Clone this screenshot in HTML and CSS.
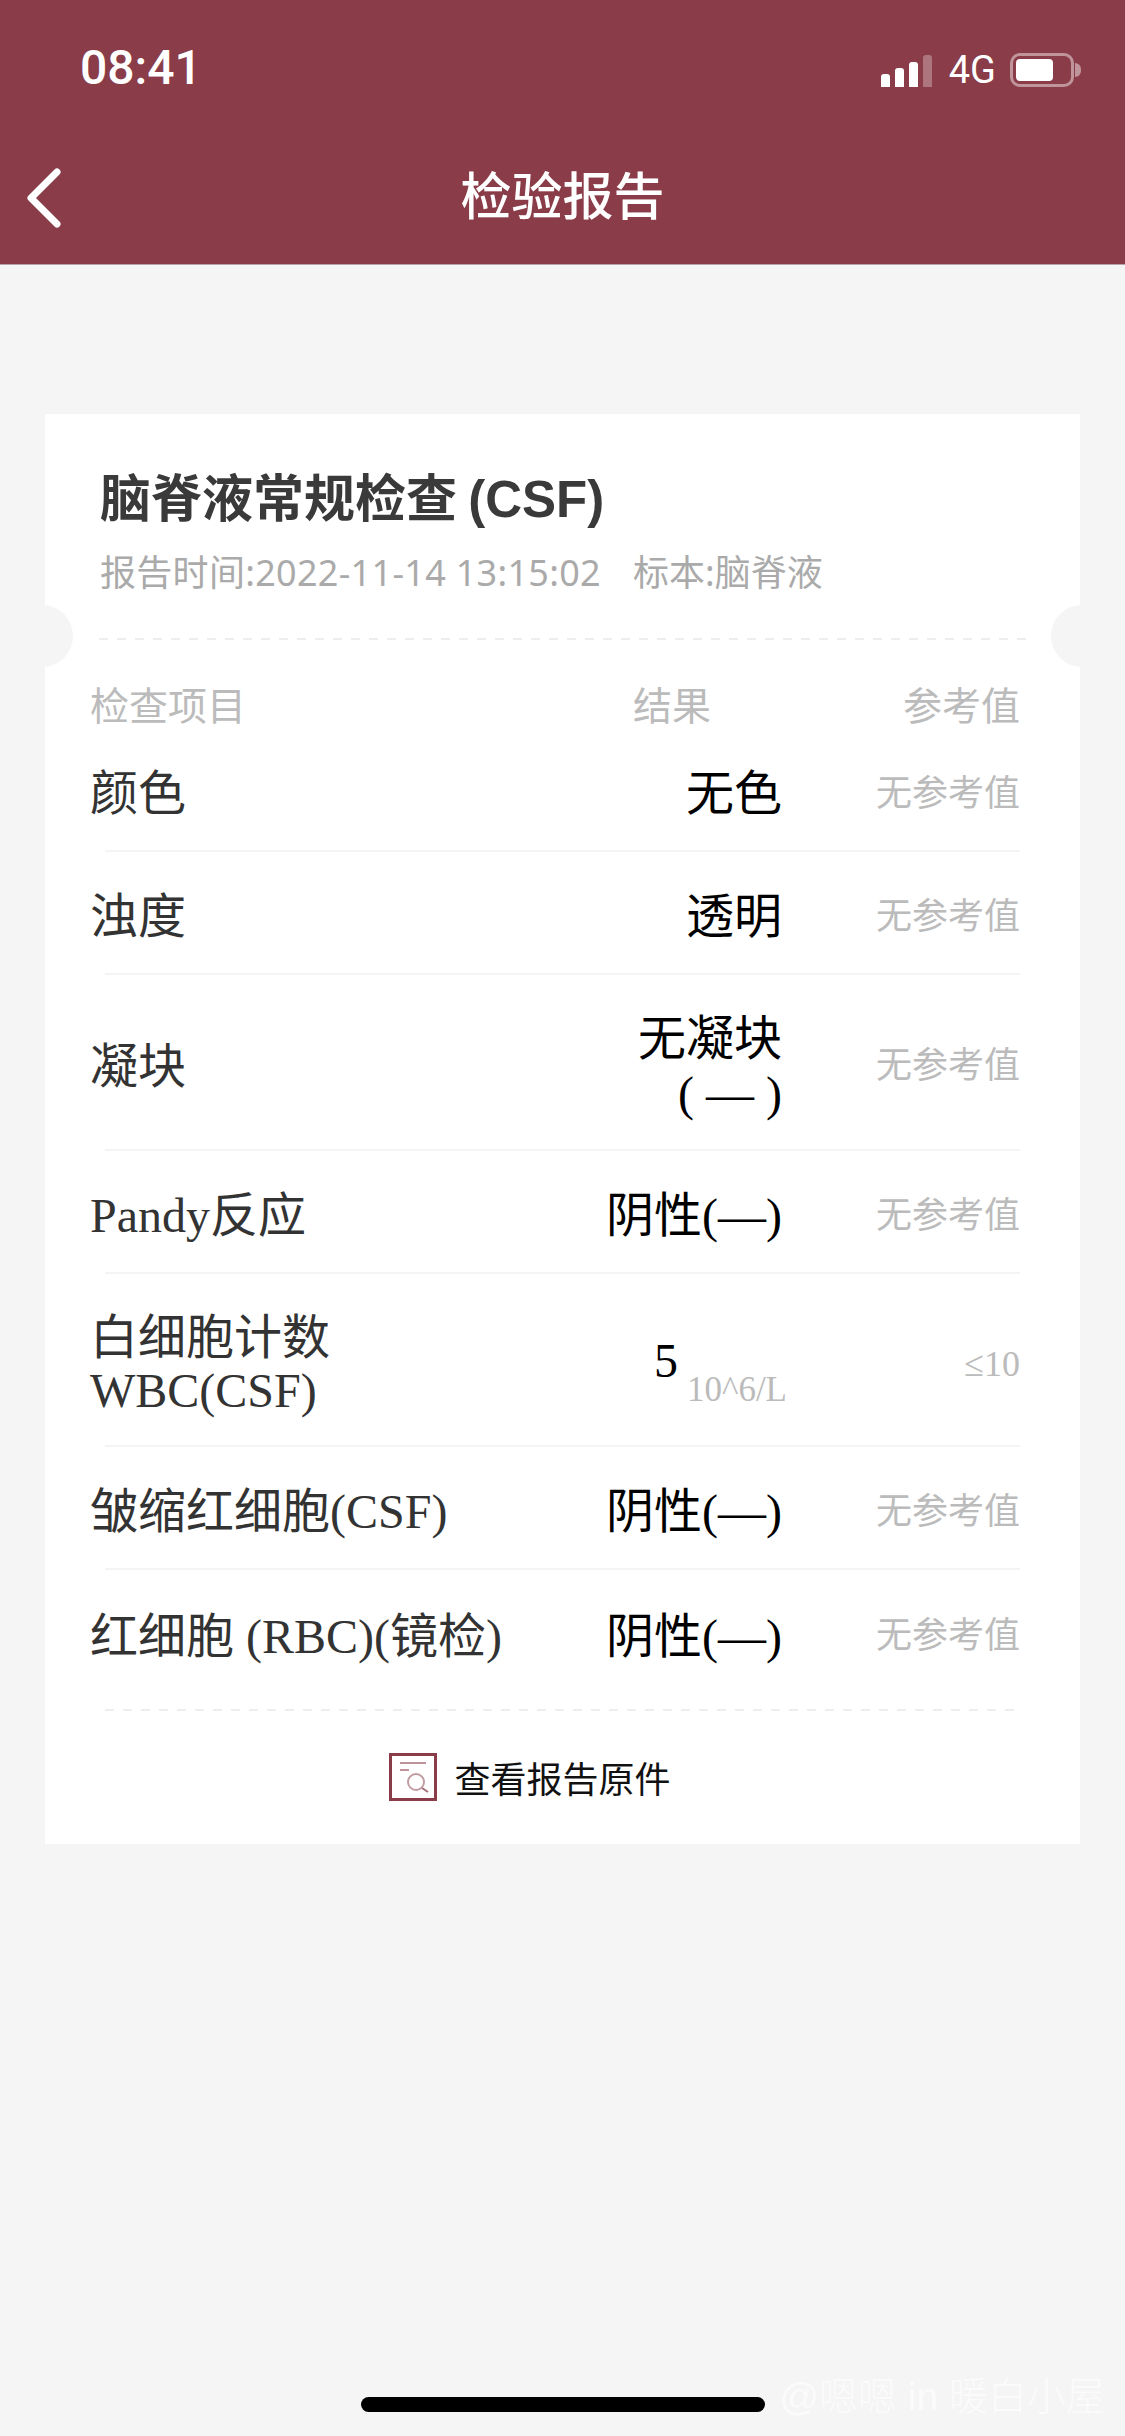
FILE: index.html
```html
<!DOCTYPE html>
<html lang="zh-CN">
<head>
    <meta charset="UTF-8">
    <meta name="viewport" content="width=device-width, initial-scale=1.0">
    <title>检验报告</title>
    <link rel="stylesheet" href="styles.css">
</head>
<body>
    <header class="top">
        <div class="status-bar">
            <span class="time">08:41</span>
            <div class="status-right">
                <div class="signal">
                    <i class="bar bar-1"></i>
                    <i class="bar bar-2"></i>
                    <i class="bar bar-3"></i>
                    <i class="bar bar-4"></i>
                </div>
                <span class="network">4G</span>
                <div class="battery"><i class="battery-level"></i></div>
                <i class="battery-nub"></i>
            </div>
        </div>
        <div class="nav-bar">
            <svg class="back" width="40" height="64" viewBox="0 0 40 64">
                <path d="M33 6 L7 32 L33 58" fill="none" stroke="#fff" stroke-width="7" stroke-linecap="round" stroke-linejoin="round"/>
            </svg>
            <h1 class="nav-title">检验报告</h1>
        </div>
    </header>

    <main class="card">
        <i class="notch notch-left"></i>
        <i class="notch notch-right"></i>

        <div class="card-head">
            <h2 class="report-title">脑脊液常规检查 (CSF)</h2>
            <p class="report-meta"><span class="meta-time">报告时间:2022-11-14 13:15:02</span><span>标本:脑脊液</span></p>
        </div>
        <div class="dash dash-top"></div>

        <div class="table-head">
            <span>检查项目</span>
            <span>结果</span>
            <span class="head-ref">参考值</span>
        </div>

        <div class="row">
            <div class="name">颜色</div>
            <div class="result">无色</div>
            <div class="ref">无参考值</div>
        </div>
        <div class="row">
            <div class="name">浊度</div>
            <div class="result">透明</div>
            <div class="ref">无参考值</div>
        </div>
        <div class="row row-clot">
            <div class="name">凝块</div>
            <div class="result">无凝块<br>( — )</div>
            <div class="ref">无参考值</div>
        </div>
        <div class="row">
            <div class="name">Pandy反应</div>
            <div class="result">阴性(—)</div>
            <div class="ref">无参考值</div>
        </div>
        <div class="row row-wbc">
            <div class="name">白细胞计数<br>WBC(CSF)</div>
            <div class="result result-num">5<span class="unit">10^6/L</span></div>
            <div class="ref ref-num">≤10</div>
        </div>
        <div class="row">
            <div class="name">皱缩红细胞(CSF)</div>
            <div class="result">阴性(—)</div>
            <div class="ref">无参考值</div>
        </div>
        <div class="row row-last">
            <div class="name">红细胞 (RBC)(镜检)</div>
            <div class="result">阴性(—)</div>
            <div class="ref">无参考值</div>
        </div>

        <div class="dash dash-bottom"></div>

        <div class="original">
            <svg width="48" height="48" viewBox="0 0 48 48">
                <rect x="1.5" y="1.5" width="45" height="45" fill="#fff" stroke="#8a3c48" stroke-width="3"/>
                <path d="M11 10 H37" stroke="#a8707a" stroke-width="1.5" fill="none"/>
                <path d="M11 17 H20" stroke="#a8707a" stroke-width="1.5" fill="none"/>
                <circle cx="27" cy="29" r="8" fill="none" stroke="#c29ca3" stroke-width="2"/>
                <path d="M33 35 L39 39" stroke="#a8707a" stroke-width="2" fill="none"/>
            </svg>
            <span>查看报告原件</span>
        </div>
    </main>

    <div class="home-bar"></div>
    <div class="watermark">@嗯嗯 in 暖白小屋</div>
</body>
</html>
```

FILE: styles.css
```css
* {
    box-sizing: border-box;
}
body {
    margin: 0;
    height: 2436px;
    position: relative;
    overflow: hidden;
    background: #f5f5f5;
    font-family: "Liberation Sans", "Noto Sans CJK SC", sans-serif;
}
/* Шапка */
.top {
    height: 265px;
    background: #8a3c48;
    border-bottom: 1px solid #b9a5a8;
    color: #fff;
}
.status-bar {
    height: 140px;
    padding: 41px 44px 0 80px;
    display: flex;
    justify-content: space-between;
    align-items: flex-start;
}
.time {
    margin-top: 1px;
    font-family: Roboto, sans-serif;
    font-weight: 500;
    font-size: 48px;
    line-height: 52px;
}
.status-right {
    display: flex;
    align-items: center;
    height: 50px;
}
.signal {
    display: flex;
    align-items: flex-end;
    gap: 5px;
    height: 32px;
    margin-top: 9px;
    margin-right: 3px;
}
.bar {
    display: block;
    width: 9px;
    background: #fff;
    border-radius: 3px 3px 0 0;
}
.bar-1 { height: 13px; }
.bar-2 { height: 19px; }
.bar-3 { height: 25px; }
.bar-4 { height: 32px; background: rgba(255,255,255,0.3); }
.network {
    font-family: Roboto, sans-serif;
    font-weight: 400;
    font-size: 38px;
    line-height: 50px;
    margin: 8px 14px 0 14px;
}
.battery {
    width: 64px;
    height: 34px;
    margin-top: 8px;
    border: 3px solid rgba(255,255,255,0.45);
    border-radius: 10px;
    padding: 3px;
}
.battery-level {
    display: block;
    width: 37px;
    height: 22px;
    background: #fff;
    border-radius: 4px;
}
.battery-nub {
    display: block;
    width: 6px;
    height: 14px;
    margin: 8px 0 0 1px;
    background: rgba(255,255,255,0.45);
    border-radius: 0 6px 6px 0;
}
.nav-bar {
    height: 124px;
    position: relative;
    display: flex;
    justify-content: center;
    align-items: center;
}
.back {
    position: absolute;
    left: 24px;
    top: 26px;
}
.nav-title {
    margin: 0 0 8px;
    font-size: 51px;
    font-weight: 500;
    line-height: 70px;
}
/* Карточка */
.card {
    position: relative;
    margin: 149px 45px 0;
    height: 1430px;
    background: #fff;
}
.notch {
    position: absolute;
    top: 191px;
    width: 62px;
    height: 62px;
    border-radius: 50%;
    background: #f5f5f5;
}
.notch-left { left: -34px; }
.notch-right { right: -33px; }
.card-head {
    padding: 51px 0 40px 55px;
}
.report-title {
    margin: 0;
    font-size: 51px;
    font-weight: bold;
    line-height: 70px;
    color: #3a3a3a;
    word-spacing: -3px;
}
.report-meta {
    margin: 13px 0 0;
    font-family: "Noto Sans", "Noto Sans CJK SC", sans-serif;
    font-size: 36px;
    line-height: 50px;
    color: #aaa;
    display: flex;
    gap: 32px;
}
.meta-time {
    letter-spacing: 0.3px;
}
.dash {
    height: 2px;
    background: repeating-linear-gradient(90deg, #eee 0 9px, transparent 9px 18px);
}
.dash-top {
    margin: 0 54px;
}
.dash-bottom {
    margin: 15px 60px 0;
}
.table-head {
    display: grid;
    grid-template-columns: 543px 1fr auto;
    margin: 0 60px 0 45px;
    padding-top: 45px;
    font-size: 39px;
    line-height: 44px;
    color: #bbb;
}
.row {
    display: flex;
    align-items: center;
    min-height: 123px;
    margin: 0 60px;
    border-bottom: 2px solid #f4f4f4;
    font-family: "Liberation Serif", "Noto Sans CJK SC", serif;
    font-size: 48px;
}
.row-clot { min-height: 176px; }
.row-wbc { min-height: 173px; }
.row-last { border-bottom: 0; min-height: 124px; }
.name {
    flex: 1;
    margin-left: -15px;
    padding-top: 8px;
    line-height: 53px;
    color: #333;
}
.result {
    margin-right: -2px;
    text-align: right;
    padding-top: 8px;
    line-height: 55px;
    color: #000;
}
.result-num {
    padding-top: 20px;
    margin-right: -7px;
    white-space: nowrap;
}
.unit {
    margin-left: 9px;
    font-size: 35px;
    color: #bbb;
    vertical-align: -24px;
    line-height: 1;
}
.ref {
    width: 240px;
    text-align: right;
    font-size: 36px;
    color: #bbb;
}
.ref-num {
    padding-top: 8px;
}
.original {
    height: 131px;
    padding-right: 65px;
    display: flex;
    justify-content: center;
    align-items: center;
    gap: 17px;
    font-size: 36px;
    color: #111;
}
/* Низ экрана */
.home-bar {
    position: absolute;
    left: 361px;
    top: 2397px;
    width: 404px;
    height: 15px;
    border-radius: 8px;
    background: #000;
}
.watermark {
    position: absolute;
    right: 20px;
    top: 2372px;
    font-size: 39px;
    line-height: 50px;
    font-weight: 300;
    white-space: nowrap;
    color: #fbfbfb;
}
```
